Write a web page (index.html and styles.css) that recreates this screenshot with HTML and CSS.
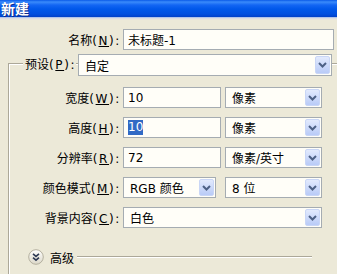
FILE: index.html
```html
<!DOCTYPE html>
<html lang="zh-CN">
<head>
<meta charset="utf-8">
<title>新建</title>
<link rel="stylesheet" href="styles.css">
</head>
<body>
<div class="titlebar"><span class="title">新建</span></div>
<div class="titleband"></div>

<div class="row name-row">
  <span class="lbl lbl-name">名称<span class="k">(<u>N</u>):</span></span>
  <div class="field w-name">未标题-1</div>
</div>

<div class="group">
  <div class="group-head">
    <span class="legend">预设<span class="k">(<u>P</u>):</span></span>
    <div class="select w-preset"><span class="val">自定</span><span class="btn"><svg width="9" height="6" viewBox="0 0 9 6"><path d="M1 1L4.5 4.5L8 1" fill="none" stroke="#4d6185" stroke-width="2"/></svg></span></div>
  </div>

  <div class="rows">
    <div class="row">
      <span class="lbl">宽度<span class="k">(<u>W</u>):</span></span>
      <div class="field w-num">10</div>
      <div class="select w-unit"><span class="val">像素</span><span class="btn"><svg width="9" height="6" viewBox="0 0 9 6"><path d="M1 1L4.5 4.5L8 1" fill="none" stroke="#4d6185" stroke-width="2"/></svg></span></div>
    </div>
    <div class="row">
      <span class="lbl">高度<span class="k">(<u>H</u>):</span></span>
      <div class="field w-num"><span class="sel">10</span></div>
      <div class="select w-unit"><span class="val">像素</span><span class="btn"><svg width="9" height="6" viewBox="0 0 9 6"><path d="M1 1L4.5 4.5L8 1" fill="none" stroke="#4d6185" stroke-width="2"/></svg></span></div>
    </div>
    <div class="row">
      <span class="lbl">分辨率<span class="k">(<u>R</u>):</span></span>
      <div class="field w-num">72</div>
      <div class="select w-unit"><span class="val">像素/英寸</span><span class="btn"><svg width="9" height="6" viewBox="0 0 9 6"><path d="M1 1L4.5 4.5L8 1" fill="none" stroke="#4d6185" stroke-width="2"/></svg></span></div>
    </div>
    <div class="row">
      <span class="lbl">颜色模式<span class="k">(<u>M</u>):</span></span>
      <div class="select w-mode"><span class="val">RGB 颜色</span><span class="btn"><svg width="9" height="6" viewBox="0 0 9 6"><path d="M1 1L4.5 4.5L8 1" fill="none" stroke="#4d6185" stroke-width="2"/></svg></span></div>
      <div class="select w-unit w-bits"><span class="val">8 位</span><span class="btn"><svg width="9" height="6" viewBox="0 0 9 6"><path d="M1 1L4.5 4.5L8 1" fill="none" stroke="#4d6185" stroke-width="2"/></svg></span></div>
    </div>
    <div class="row">
      <span class="lbl">背景内容<span class="k">(<u>C</u>):</span></span>
      <div class="select w-bg"><span class="val">白色</span><span class="btn"><svg width="9" height="6" viewBox="0 0 9 6"><path d="M1 1L4.5 4.5L8 1" fill="none" stroke="#4d6185" stroke-width="2"/></svg></span></div>
    </div>
  </div>

  <div class="adv">
    <svg class="adv-icon" width="16" height="16" viewBox="0 0 16 16">
      <defs><linearGradient id="g" x1="0" y1="0" x2="0" y2="1"><stop offset="0" stop-color="#ffffff"/><stop offset="1" stop-color="#dcd8c8"/></linearGradient></defs>
      <circle cx="8" cy="8" r="7.3" fill="url(#g)" stroke="#b4b09f" stroke-width="1"/>
      <path d="M5 4.8L8 7.4L11 4.8M5 8.6L8 11.2L11 8.6" fill="none" stroke="#2e3a55" stroke-width="1.6"/>
    </svg>
    <span class="adv-text">高级</span>
    <span class="adv-line"></span>
  </div>
</div>
</body>
</html>
```

FILE: styles.css
```css
html, body {
  margin: 0;
  padding: 0;
}
body {
  width: 337px;
  height: 274px;
  overflow: hidden;
  background: #ece9d8;
  font-family: "DejaVu Sans", "Noto Sans CJK SC", sans-serif;
  font-size: 12px;
  color: #000;
}
u { text-decoration: underline; text-underline-offset: 1px; }
.k { letter-spacing: 1.6px; }

.titlebar {
  height: 17px;
  background: linear-gradient(to bottom, #0a5ae8 0px, #3a8bfb 2px, #1366f3 5px, #0058ea 9px, #004fdf 14px, #0040c8 17px);
  display: flex;
  align-items: center;
}
.title {
  font-family: "Noto Sans CJK SC", sans-serif;
  font-weight: bold;
  font-size: 14px;
  line-height: 17px;
  color: #fff;
  text-shadow: 1px 1px 0 #0a2a8a;
  margin-left: 1px;
}
.titleband {
  height: 3px;
  background: linear-gradient(to bottom, #9cb8ec, #dcdde2, #ece9d8);
}

.row {
  display: flex;
  align-items: center;
  height: 21px;
}
.name-row {
  margin-top: 9px;
}
.lbl {
  width: 112px;
  box-sizing: border-box;
  text-align: right;
  padding-right: 0;
  margin-right: 2px;
  white-space: nowrap;
}
.lbl-name { width: 121px; }

.field {
  height: 21px;
  box-sizing: border-box;
  border: 1px solid #a5acb2;
  background: #fffef8;
  padding-left: 4px;
  display: flex;
  align-items: center;
  white-space: nowrap;
}
.w-name { width: 211px; }
.w-num { width: 98px; }
.sel {
  background: #316ac5;
  color: #fff;
  line-height: 15px;
}

.select {
  height: 21px;
  box-sizing: border-box;
  border: 1px solid #a5acb2;
  background: #fffef8;
  display: flex;
  align-items: center;
  justify-content: space-between;
  padding: 1px;
  white-space: nowrap;
}
.select .val { padding-left: 5px; }
.btn {
  width: 15px;
  height: 100%;
  box-sizing: border-box;
  border: 1px solid #c9d6f6;
  border-radius: 2px;
  background: linear-gradient(to bottom, #e2eafd, #b9cbf7);
  display: flex;
  align-items: center;
  justify-content: center;
}
.w-unit { width: 97px; margin-left: 4px; }
.w-mode { width: 93px; }
.w-bits { margin-left: 9px; }
.w-bg { width: 199px; }
.w-preset { width: 254px; height: 22px; margin-left: 2px; }

.group {
  margin-top: 13px;
  margin-left: 8px;
  width: 340px;
  height: 220px;
  border-top: 1px solid #aca899;
  border-left: 1px solid #aca899;
  box-shadow: inset 1px 1px 0 #fff;
}
.group-head {
  display: flex;
  align-items: center;
  margin-top: -10px;
  margin-left: 14px;
  height: 22px;
}
.legend {
  background: #ece9d8;
  padding: 0 0 0 2px;
  line-height: 22px;
  white-space: nowrap;
}

.rows {
  margin-top: 11px;
  display: flex;
  flex-direction: column;
  gap: 9px;
}

.adv {
  display: flex;
  align-items: center;
  margin-top: 21px;
  margin-left: 19px;
  height: 16px;
}
.adv-icon { display: block; }
.adv-text {
  margin-left: 6px;
  font-family: "Noto Sans CJK SC", sans-serif;
}
.adv-line {
  margin-left: 3px;
  width: 235px;
  height: 1px;
  background: #aca899;
  border-bottom: 1px solid #fff;
}
```
